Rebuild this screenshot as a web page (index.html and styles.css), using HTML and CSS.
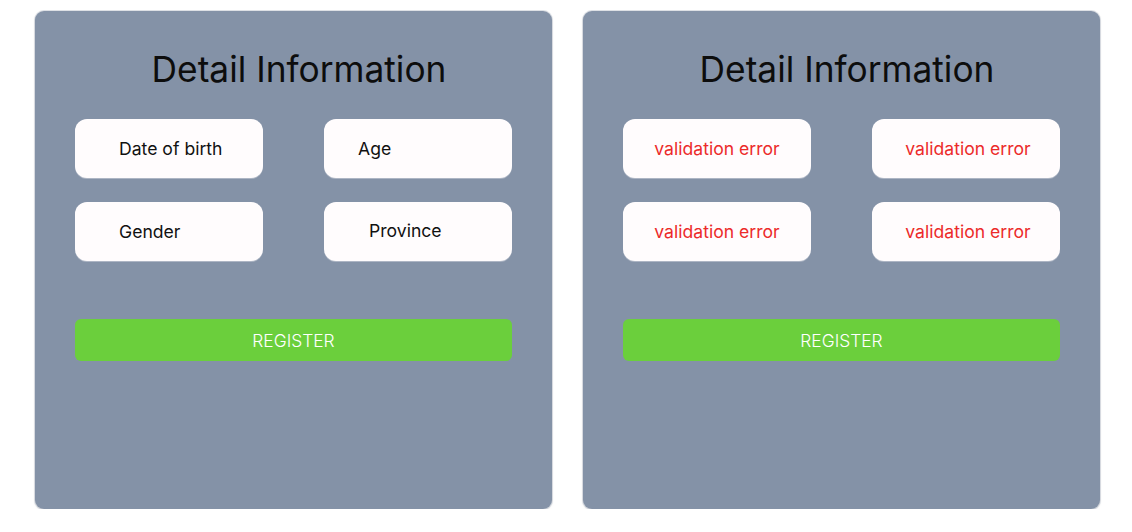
FILE: index.html
```html
<!DOCTYPE html>
<html>
<head>
<meta charset="utf-8">
<link rel="stylesheet" href="styles.css">
</head>
<body>
<div class="page">
  <div class="panel">
    <h1 class="title">Detail Information</h1>
    <div class="fields">
      <div class="field pad-44">Date of birth</div>
      <div class="field pad-34">Age</div>
      <div class="field pad-44">Gender</div>
      <div class="field pad-45 up">Province</div>
    </div>
    <button class="register">REGISTER</button>
  </div>
  <div class="panel">
    <h1 class="title">Detail Information</h1>
    <div class="fields">
      <div class="field error">validation error</div>
      <div class="field error shift">validation error</div>
      <div class="field error">validation error</div>
      <div class="field error shift">validation error</div>
    </div>
    <button class="register">REGISTER</button>
  </div>
</div>
</body>
</html>
```

FILE: styles.css
```css
* { box-sizing: border-box; }
html, body { margin: 0; background: #ffffff; }
body { font-family: Inter, "Noto Sans", sans-serif; }
.page {
  display: flex;
  gap: 31px;
  padding: 11px 0 0 35px;
}
.panel {
  width: 517px;
  height: 498px;
  background: #8492a7;
  border-radius: 9px;
  box-shadow: 0 0 0 1px rgba(190, 196, 206, 0.5), 0 1px 2px rgba(150, 158, 170, 0.5);
  padding: 37px 40px 0 40px;
  display: flex;
  flex-direction: column;
}
.title {
  margin: 0;
  font-size: 35.3px;
  font-weight: 400;
  line-height: 44px;
  color: #0d0d0d;
  text-align: center;
  padding-left: 11px;
}
.fields {
  margin-top: 27px;
  display: grid;
  grid-template-columns: 188px 188px;
  justify-content: space-between;
  row-gap: 24px;
}
.field {
  height: 59px;
  background: #fffcfd;
  border-radius: 12px;
  display: flex;
  align-items: center;
  font-size: 17.6px;
  color: #111111;
  box-shadow: 0 1px 0 rgba(200, 205, 215, 0.6);
}
.pad-44 { padding-left: 44px; }
.pad-34 { padding-left: 34px; }
.pad-45 { padding-left: 45px; }
.up { padding-bottom: 3px; }
.error {
  justify-content: center;
  color: #ec2a2a;
}
.shift { padding-left: 4px; }
.register {
  margin-top: 58px;
  height: 42px;
  border: none;
  border-radius: 6px;
  background: #6bcf3c;
  color: #ffffff;
  font-family: Inter, "Noto Sans", sans-serif;
  font-size: 17.4px;
  font-weight: 300;
  padding: 0;
}
```
